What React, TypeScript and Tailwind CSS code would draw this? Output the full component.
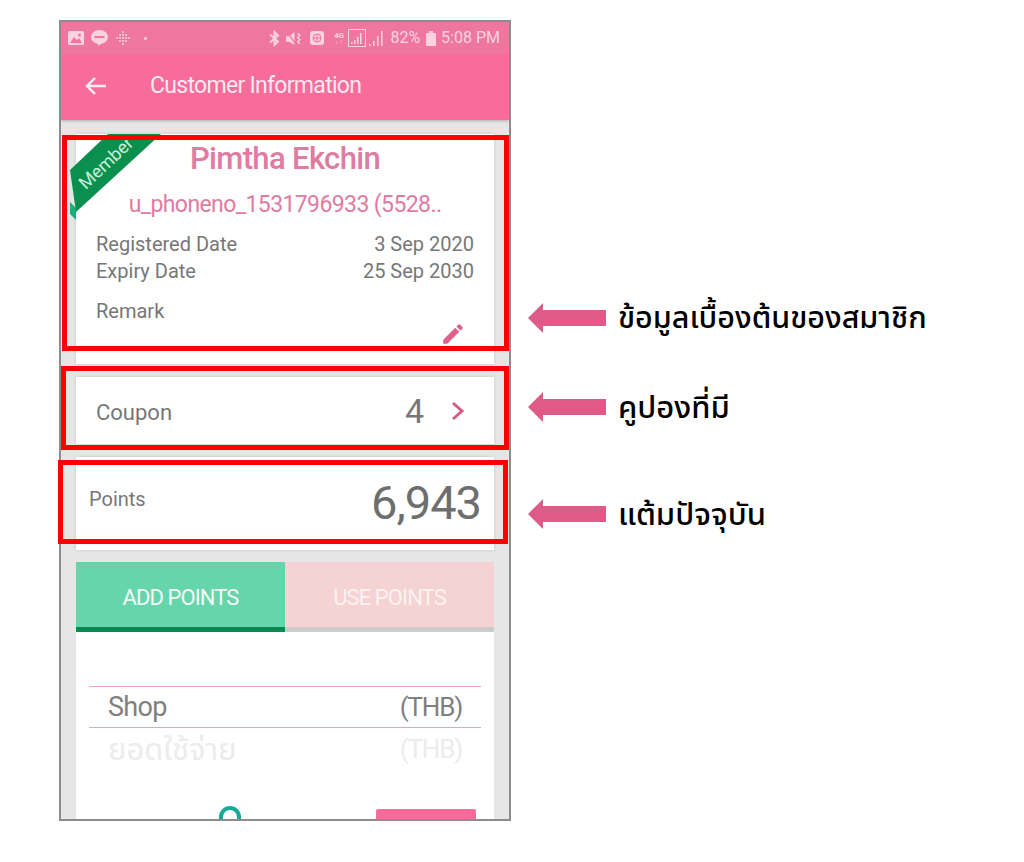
import React from "react";

const font = { fontFamily: '"Roboto","Noto Sans","Noto Sans Thai","DejaVu Sans",sans-serif' };

function Arrow() {
  return (
    <svg width="78" height="30" viewBox="0 0 78 30" className="shrink-0">
      <polygon points="0,15 15,0 15,7 78,7 78,23 15,23 15,30" fill="#e05a87" />
    </svg>
  );
}

function StatusLeft() {
  return (
    <div className="flex items-center gap-[7px]">
      <svg width="16" height="14" viewBox="0 0 16 14">
        <rect width="16" height="14" rx="1.5" fill="#fbd3e0" />
        <polygon points="2,12 6,6 9,9 11,7 14,12" fill="#f2759f" />
        <circle cx="11.5" cy="4" r="1.5" fill="#f2759f" />
      </svg>
      <svg width="17" height="16" viewBox="0 0 17 16">
        <ellipse cx="8.5" cy="7" rx="8.5" ry="7" fill="#fbd3e0" />
        <polygon points="7,13 11,13 7,16" fill="#fbd3e0" />
        <rect x="3.5" y="6" width="10" height="2" fill="#f2759f" />
      </svg>
      <svg width="16" height="16" viewBox="0 0 16 16" fill="#fbd3e0">
        {[
          [7, 1], [7, 4], [7, 7], [7, 10], [7, 13], [4, 4], [4, 7], [4, 10], [10, 4], [10, 7], [10, 10], [1, 7], [13, 7],
        ].map(([x, y], i) => (
          <rect key={i} x={x} y={y} width="2" height="2" rx="1" />
        ))}
      </svg>
      <span className="ml-[6px] w-[3px] h-[3px] rounded-full bg-[#fbd3e0]" />
    </div>
  );
}

function StatusRight() {
  return (
    <div className="flex items-center text-[#fbd3e0]">
      <svg width="11" height="17" viewBox="0 0 11 16" fill="none" stroke="#fbd3e0" strokeWidth="2" className="mr-[6px]">
        <path d="M1 4 L9 11 L5.5 14.5 V1.5 L9 5 L1 12" />
      </svg>
      <svg width="16" height="15" viewBox="0 0 15 14" className="mr-[8px]" fill="#fbd3e0">
        <polygon points="0,5 3,5 8,1 8,13 3,10 0,10" />
        <path d="M1 1 L9 12" stroke="#f2759f" strokeWidth="1.2" />
        <path d="M11 2 l2 2 -2 2 2 2 -2 2 2 2" fill="none" stroke="#fbd3e0" strokeWidth="1.3" />
      </svg>
      <svg width="14" height="14" viewBox="0 0 14 14" className="mr-[9px]">
        <rect width="14" height="14" rx="3" fill="#fbd3e0" />
        <circle cx="7" cy="7" r="4" fill="none" stroke="#f2759f" strokeWidth="1" />
        <path d="M3 7 H11 M7 3 V11" stroke="#f2759f" strokeWidth="1" />
      </svg>
      <div className="flex flex-col items-center mr-[4px] leading-none w-[11px]">
        <span className="text-[8px] font-bold">4G</span>
        <span className="text-[5px] opacity-60">↓↑</span>
      </div>
      <svg width="18" height="18" viewBox="0 0 18 18" className="mr-[3px]" fill="#fbd3e0">
        <rect x="0.5" y="0.5" width="17" height="17" fill="none" stroke="#fbd3e0" />
        <rect x="3" y="13" width="1.5" height="2" />
        <rect x="6" y="11" width="1.5" height="4" />
        <rect x="9" y="8" width="1.5" height="7" />
        <rect x="12" y="4" width="1.5" height="11" />
      </svg>
      <svg width="15" height="16" viewBox="0 0 15 16" className="mr-[6px]" fill="#fbd3e0">
        <rect x="0" y="14" width="1.5" height="2" />
        <rect x="4" y="11" width="1.5" height="5" />
        <rect x="8" y="6" width="1.5" height="10" />
        <rect x="12" y="1" width="1.5" height="15" />
      </svg>
      <span className="text-[16px] leading-none mr-[6px]">82%</span>
      <svg width="10" height="15" viewBox="0 0 10 15" className="mr-[5px]" fill="#fbd3e0">
        <rect x="3" y="0" width="4" height="2" />
        <rect x="0" y="2" width="10" height="13" rx="1" />
      </svg>
      <span className="text-[16px] leading-none">5:08 PM</span>
    </div>
  );
}

export default function App() {
  return (
    <div className="relative w-[1024px] h-[862px] bg-white overflow-hidden flex items-start pt-5 pl-[59px]" style={font}>
      <div className="w-[452px] h-[801px] border-2 border-[#8c8c8c] bg-[#e6e6e6] flex flex-col overflow-hidden shrink-0">
        <div className="h-[98px] shrink-0 bg-[#f76c9b] flex flex-col shadow-[0_1px_3px_rgba(0,0,0,0.25)]">
          <div className="h-[32px] bg-[#ee769f] flex items-center justify-between pl-[7px] pr-[9px]">
            <StatusLeft />
            <StatusRight />
          </div>
          <div className="flex-1 flex items-center pl-[24px] text-[#fde8f0] pb-[3px]">
            <svg width="22" height="20" viewBox="0 0 22 20" fill="none" stroke="#fdeef3" strokeWidth="2.4">
              <path d="M21 10 H2 M10 2 L2 10 L10 18" />
            </svg>
            <span className="ml-[43px] text-[23px] tracking-[-0.7px] leading-none">Customer Information</span>
          </div>
        </div>

        <div className="flex flex-col pl-[15px] pr-[15px] pt-[14px]">
          <div className="h-[230px] bg-white shadow-[0_0_3px_rgba(0,0,0,0.15)] relative flex flex-col shrink-0">
            <div className="flex flex-col items-center">
              <span className="text-[31px] tracking-[-0.65px] leading-none mt-[9px] text-[#e07ba2] font-medium">Pimtha Ekchin</span>
              <span className="text-[23px] tracking-[-0.6px] leading-none mt-[19px] text-[#e07ba2]">u_phoneno_1531796933 (5528..</span>
            </div>
            <div className="flex flex-col mt-[15px] px-[20px] text-[20px] text-[#777777] leading-[27px]">
              <div className="flex justify-between">
                <span>Registered Date</span>
                <span>3 Sep 2020</span>
              </div>
              <div className="flex justify-between">
                <span>Expiry Date</span>
                <span>25 Sep 2030</span>
              </div>
              <span className="mt-[13px]">Remark</span>
            </div>
            <svg width="26" height="26" viewBox="0 0 24 24" fill="#df5f8d" className="absolute right-[28px] bottom-[17px]">
              <path d="M3 17.25V21h3.75L17.81 9.94l-3.75-3.75L3 17.25zM20.71 7.04a1 1 0 0 0 0-1.41l-2.34-2.34a1 1 0 0 0-1.41 0l-1.83 1.83 3.75 3.75 1.83-1.83z" />
            </svg>
            <svg width="100" height="92" viewBox="0 0 100 92" className="absolute -left-[7px] -top-[2px]">
              <polygon points="39,2 90,2 96,8 50,8" fill="#17a673" />
              <polygon points="1,70 7,76 7,88 1,82" fill="#16b07a" />
              <polygon points="1,38 39,2 92,2 7,80" fill="#0b8f4e" />
            </svg>
            <span className="absolute left-[-10px] top-[20px] w-[80px] text-center rotate-[-43deg] text-[18px] leading-none text-[#c8f0da]">
              Member
            </span>
          </div>

          <div className="mt-[13px] h-[67px] bg-white shadow-[0_0_3px_rgba(0,0,0,0.15)] flex items-center px-[20px] shrink-0">
            <span className="text-[22px] text-[#777777] leading-none mt-[4px]">Coupon</span>
            <span className="ml-auto text-[34px] text-[#777777] leading-none">4</span>
            <svg width="14" height="20" viewBox="0 0 14 20" fill="none" stroke="#d65c85" strokeWidth="3" className="ml-[27px] mr-[9px]">
              <path d="M2 2 L11 10 L2 18" />
            </svg>
          </div>

          <div className="mt-[13px] h-[93px] bg-white shadow-[0_0_3px_rgba(0,0,0,0.15)] flex items-center pl-[13px] pr-[13px] shrink-0">
            <span className="text-[20px] text-[#777777] leading-none mb-[10px]">Points</span>
            <span className="ml-auto text-[47px] tracking-[-1px] text-[#6e6e6e] leading-none mb-[2px]">6,943</span>
          </div>

          <div className="mt-[12px] bg-white flex flex-col shrink-0 h-[300px]">
            <div className="flex h-[70px] shrink-0">
              <div className="flex-1 flex items-center justify-center pt-[6px] bg-[#67d5ac] border-b-[5px] border-[#0a8a50] text-[#f2fbf7] text-[22px] tracking-[-0.9px] leading-none">
                ADD POINTS
              </div>
              <div className="flex-1 flex items-center justify-center pt-[6px] bg-[#f5d2d4] border-b-[5px] border-[#cccccc] text-[#fdf1f1] text-[22px] tracking-[-0.9px] leading-none">
                USE POINTS
              </div>
            </div>
            <div className="mt-[54px] mx-[13px] border-t border-[#e8a4bb] h-[41px] flex items-center justify-between px-[19px] text-[#808080] leading-none">
              <span className="text-[27px] tracking-[-0.7px]">Shop</span>
              <span className="text-[26px] tracking-[-1.2px]">(THB)</span>
            </div>
            <div className="mx-[13px] border-t border-[#e8a4bb] h-[43px] flex items-center justify-between px-[19px] text-[#ececec] leading-none">
              <span className="text-[31px]">ยอดใช้จ่าย</span>
              <span className="text-[26px] tracking-[-1.2px]">(THB)</span>
            </div>
            <div className="flex items-start mt-[39px] mx-[13px] relative">
              <span className="ml-[130px] mt-[-3px] w-[22px] h-[30px] rounded-full border-[4px] border-[#15ab98] border-b-transparent" />
              <div className="ml-auto mr-[5px] w-[100px] h-[30px] rounded-t-[2px] bg-[#f76c9b]" />
            </div>
          </div>
        </div>
      </div>

      <div className="flex flex-col ml-[17px] mt-[283px] shrink-0">
        <div className="flex items-center gap-[12px] h-[30px]">
          <Arrow />
          <span className="text-[30.5px] leading-none text-black font-medium">ข้อมูลเบื้องต้นของสมาชิก</span>
        </div>
        <div className="flex items-center gap-[12px] h-[30px] mt-[59px]">
          <Arrow />
          <span className="text-[31px] leading-none text-black font-medium">คูปองที่มี</span>
        </div>
        <div className="flex items-center gap-[12px] h-[30px] mt-[77px]">
          <Arrow />
          <span className="text-[31px] leading-none text-black font-medium">แต้มปัจจุบัน</span>
        </div>
      </div>

      <div className="absolute left-[62px] top-[135px] w-[447px] h-[216px] border-[5px] border-[#ff0000]" />
      <div className="absolute left-[61px] top-[366px] w-[448px] h-[84px] border-[5px] border-[#ff0000]" />
      <div className="absolute left-[58px] top-[460px] w-[450px] h-[84px] border-[5px] border-[#ff0000]" />
    </div>
  );
}
